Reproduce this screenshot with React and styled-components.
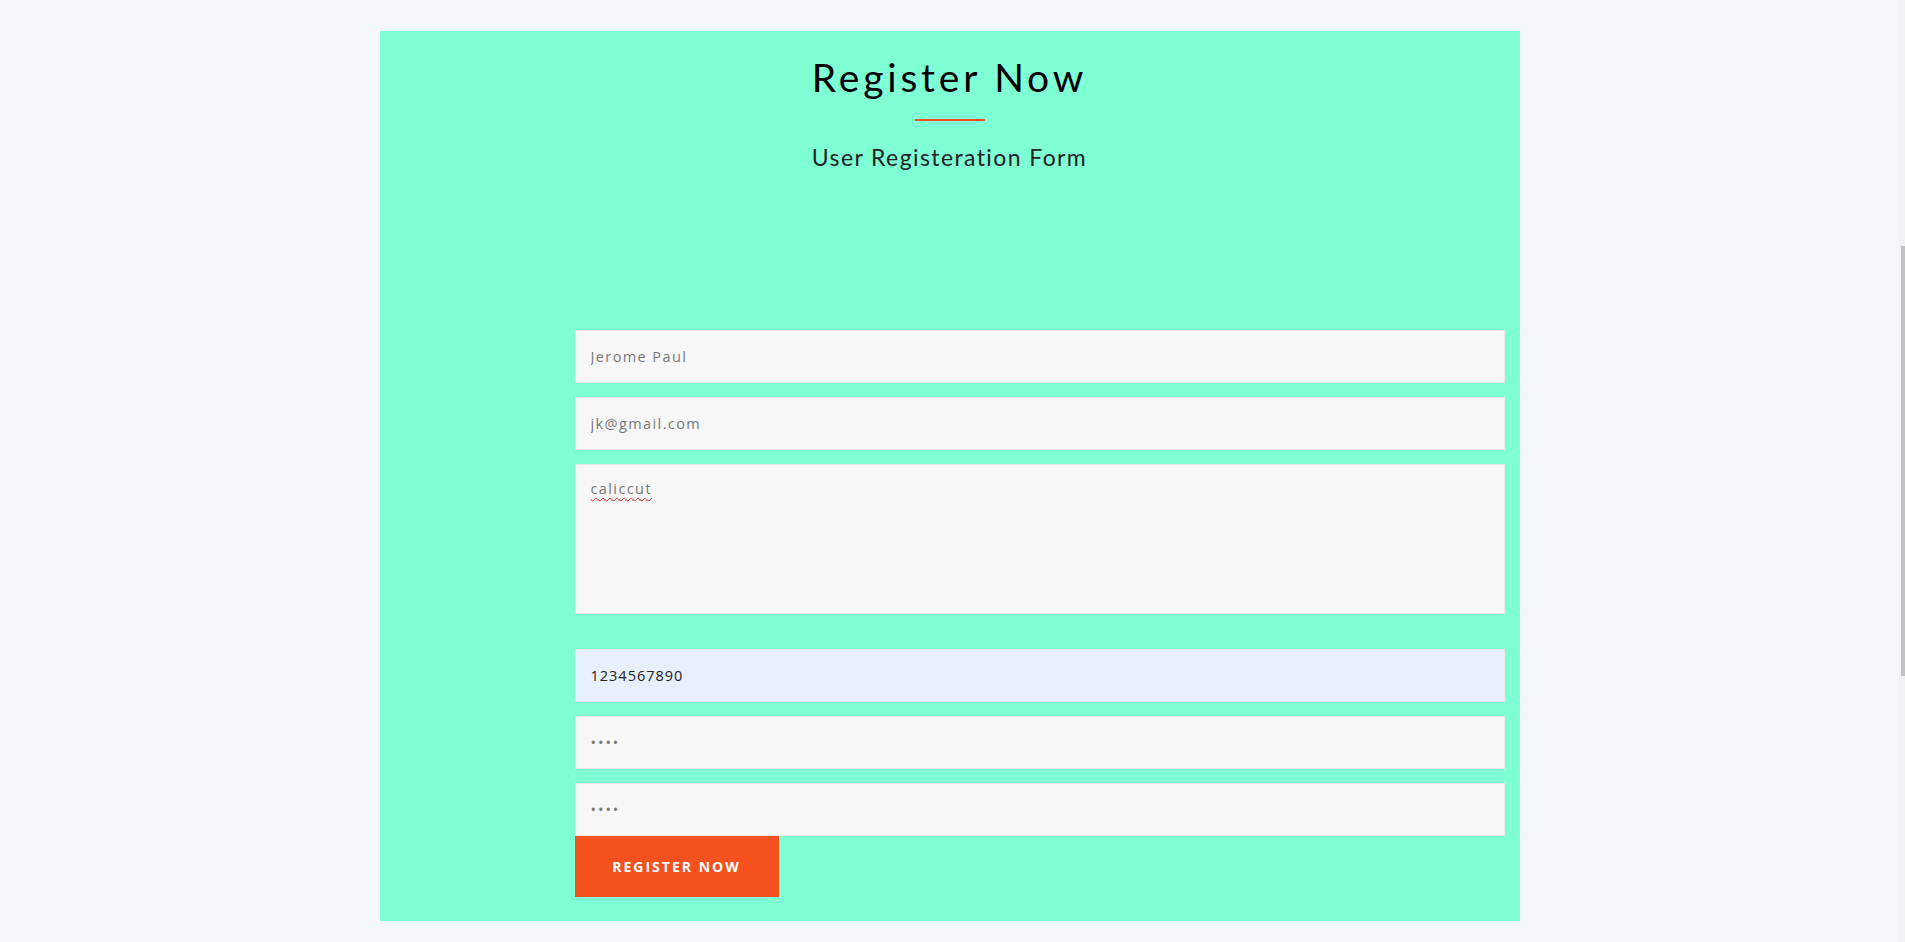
import React from 'react';
import styled, { createGlobalStyle } from 'styled-components';

const GlobalStyle = createGlobalStyle`
  html, body {
    margin: 0;
    padding: 0;
    background: #f5f6f8;
    overflow: hidden;
  }
  * {
    box-sizing: border-box;
  }
`;

const fields = [
  { id: 'name', type: 'text', value: 'Jerome Paul' },
  { id: 'email', type: 'email', value: 'jk@gmail.com' },
];

const secondFields = [
  { id: 'phone', type: 'tel', value: '1234567890', filled: true },
  { id: 'password', type: 'password', value: '1234' },
  { id: 'confirm', type: 'password', value: '1234', focus: true },
];

const App = () => {
  return (
    <Page>
      <GlobalStyle />
      <Main>
        <Panel>
          <Header>
            <Title>Register Now</Title>
            <Divider />
            <SubTitle>User Registeration Form</SubTitle>
          </Header>
          <Form onSubmit={(e) => e.preventDefault()}>
            {fields.map((f) => (
              <Input key={f.id} type={f.type} defaultValue={f.value} />
            ))}
            <TextArea defaultValue="caliccut" spellCheck={false} />
            {secondFields.map((f) => (
              <Input
                key={f.id}
                type={f.type}
                defaultValue={f.value}
                $filled={f.filled}
                autoFocus={f.focus}
              />
            ))}
            <SubmitButton type="submit">Register Now</SubmitButton>
          </Form>
        </Panel>
      </Main>
      <ScrollTrack>
        <ScrollThumb />
      </ScrollTrack>
    </Page>
  );
};

export default App;

const Page = styled.div`
  display: flex;
  width: 100%;
  height: 100vh;
`;

const Main = styled.main`
  flex: 1;
  padding-top: 31px;
`;

const Panel = styled.section`
  width: 1140px;
  margin: 0 auto;
  background-color: #7fffd4;
  padding-bottom: 24px;
`;

const Header = styled.div`
  display: flex;
  flex-direction: column;
  align-items: center;
  padding-top: 22px;
  height: 299px;
`;

const Title = styled.h2`
  margin: 0;
  font-family: 'Lato', 'Open Sans', sans-serif;
  font-weight: 400;
  font-size: 39px;
  line-height: 48px;
  letter-spacing: 3.8px;
  color: #000;
`;

const Divider = styled.span`
  display: block;
  width: 70px;
  height: 2px;
  margin-top: 18px;
  background-color: #f4511e;
`;

const SubTitle = styled.p`
  margin: 21px 0 0;
  font-family: 'Lato', 'Open Sans', sans-serif;
  font-weight: 400;
  font-size: 23px;
  line-height: 30px;
  letter-spacing: 1.4px;
  color: #222;
`;

const Form = styled.form`
  display: flex;
  flex-direction: column;
  align-items: flex-start;
  margin-left: 195px;
  margin-right: 15px;
`;

const fieldText = `
  width: 100%;
  border: 1px solid #e9e9e9;
  padding: 0 15px;
  font-family: 'Open Sans', 'Lato', sans-serif;
  font-size: 14.5px;
  letter-spacing: 1.4px;
  outline: none;
  border-radius: 0;
`;

const Input = styled.input`
  ${fieldText}
  height: 53px;
  margin-bottom: 14px;
  background-color: ${(p) => (p.$filled ? '#e8f0fe' : '#f7f7f7')};
  color: ${(p) => (p.$filled ? '#222' : '#777')};
  letter-spacing: ${(p) => (p.$filled ? '1px' : '1.4px')};
  caret-color: #333;
  &[type='password'] {
    letter-spacing: 2px;
  }
  &:last-of-type {
    margin-bottom: 0;
  }
`;

const TextArea = styled.textarea`
  ${fieldText}
  display: block;
  height: 150px;
  margin-bottom: 35px;
  padding-top: 12px;
  line-height: 24px;
  resize: none;
  background-color: #f7f7f7;
  color: #777;
  text-decoration: underline wavy #e02020;
  text-decoration-thickness: 1px;
  text-underline-offset: 3px;
`;

const SubmitButton = styled.button`
  width: 204px;
  height: 61px;
  border: 0;
  background-color: #f5511e;
  color: #fff;
  font-family: 'Open Sans', 'Lato', sans-serif;
  font-weight: 700;
  font-size: 14px;
  letter-spacing: 2px;
  text-transform: uppercase;
  cursor: pointer;
`;

const ScrollTrack = styled.div`
  width: 6px;
  height: 100%;
  background-color: #f1f1f1;
  padding-top: 246px;
  padding-left: 2px;
`;

const ScrollThumb = styled.div`
  width: 4px;
  height: 430px;
  background-color: #c1c1c1;
`;
